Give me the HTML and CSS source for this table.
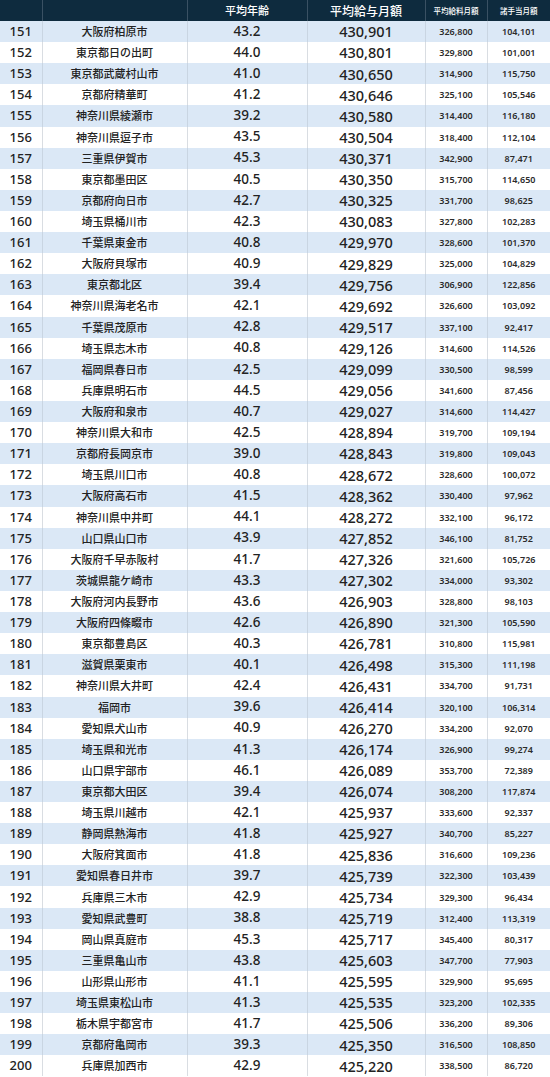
FILE: index.html
```html
<!DOCTYPE html>
<html lang="ja">
<head>
<meta charset="utf-8">
<link rel="stylesheet" href="styles.css">
</head>
<body>
<table class="rank">
<colgroup>
<col class="c-rank"><col class="c-city"><col class="c-age"><col class="c-total"><col class="c-base"><col class="c-allow">
</colgroup>
<thead>
<tr><th></th><th></th><th class="h-md">平均年齢</th><th class="h-lg">平均給与月額</th><th class="h-sm">平均給料月額</th><th class="h-sm">諸手当月額</th></tr>
</thead>
<tbody>
<tr><td class="no">151</td><td class="city">大阪府柏原市</td><td class="age">43.2</td><td class="total">430,901</td><td class="sm">326,800</td><td class="sm">104,101</td></tr>
<tr><td class="no">152</td><td class="city">東京都日の出町</td><td class="age">44.0</td><td class="total">430,801</td><td class="sm">329,800</td><td class="sm">101,001</td></tr>
<tr><td class="no">153</td><td class="city">東京都武蔵村山市</td><td class="age">41.0</td><td class="total">430,650</td><td class="sm">314,900</td><td class="sm">115,750</td></tr>
<tr><td class="no">154</td><td class="city">京都府精華町</td><td class="age">41.2</td><td class="total">430,646</td><td class="sm">325,100</td><td class="sm">105,546</td></tr>
<tr><td class="no">155</td><td class="city">神奈川県綾瀬市</td><td class="age">39.2</td><td class="total">430,580</td><td class="sm">314,400</td><td class="sm">116,180</td></tr>
<tr><td class="no">156</td><td class="city">神奈川県逗子市</td><td class="age">43.5</td><td class="total">430,504</td><td class="sm">318,400</td><td class="sm">112,104</td></tr>
<tr><td class="no">157</td><td class="city">三重県伊賀市</td><td class="age">45.3</td><td class="total">430,371</td><td class="sm">342,900</td><td class="sm">87,471</td></tr>
<tr><td class="no">158</td><td class="city">東京都墨田区</td><td class="age">40.5</td><td class="total">430,350</td><td class="sm">315,700</td><td class="sm">114,650</td></tr>
<tr><td class="no">159</td><td class="city">京都府向日市</td><td class="age">42.7</td><td class="total">430,325</td><td class="sm">331,700</td><td class="sm">98,625</td></tr>
<tr><td class="no">160</td><td class="city">埼玉県桶川市</td><td class="age">42.3</td><td class="total">430,083</td><td class="sm">327,800</td><td class="sm">102,283</td></tr>
<tr><td class="no">161</td><td class="city">千葉県東金市</td><td class="age">40.8</td><td class="total">429,970</td><td class="sm">328,600</td><td class="sm">101,370</td></tr>
<tr><td class="no">162</td><td class="city">大阪府貝塚市</td><td class="age">40.9</td><td class="total">429,829</td><td class="sm">325,000</td><td class="sm">104,829</td></tr>
<tr><td class="no">163</td><td class="city">東京都北区</td><td class="age">39.4</td><td class="total">429,756</td><td class="sm">306,900</td><td class="sm">122,856</td></tr>
<tr><td class="no">164</td><td class="city">神奈川県海老名市</td><td class="age">42.1</td><td class="total">429,692</td><td class="sm">326,600</td><td class="sm">103,092</td></tr>
<tr><td class="no">165</td><td class="city">千葉県茂原市</td><td class="age">42.8</td><td class="total">429,517</td><td class="sm">337,100</td><td class="sm">92,417</td></tr>
<tr><td class="no">166</td><td class="city">埼玉県志木市</td><td class="age">40.8</td><td class="total">429,126</td><td class="sm">314,600</td><td class="sm">114,526</td></tr>
<tr><td class="no">167</td><td class="city">福岡県春日市</td><td class="age">42.5</td><td class="total">429,099</td><td class="sm">330,500</td><td class="sm">98,599</td></tr>
<tr><td class="no">168</td><td class="city">兵庫県明石市</td><td class="age">44.5</td><td class="total">429,056</td><td class="sm">341,600</td><td class="sm">87,456</td></tr>
<tr><td class="no">169</td><td class="city">大阪府和泉市</td><td class="age">40.7</td><td class="total">429,027</td><td class="sm">314,600</td><td class="sm">114,427</td></tr>
<tr><td class="no">170</td><td class="city">神奈川県大和市</td><td class="age">42.5</td><td class="total">428,894</td><td class="sm">319,700</td><td class="sm">109,194</td></tr>
<tr><td class="no">171</td><td class="city">京都府長岡京市</td><td class="age">39.0</td><td class="total">428,843</td><td class="sm">319,800</td><td class="sm">109,043</td></tr>
<tr><td class="no">172</td><td class="city">埼玉県川口市</td><td class="age">40.8</td><td class="total">428,672</td><td class="sm">328,600</td><td class="sm">100,072</td></tr>
<tr><td class="no">173</td><td class="city">大阪府高石市</td><td class="age">41.5</td><td class="total">428,362</td><td class="sm">330,400</td><td class="sm">97,962</td></tr>
<tr><td class="no">174</td><td class="city">神奈川県中井町</td><td class="age">44.1</td><td class="total">428,272</td><td class="sm">332,100</td><td class="sm">96,172</td></tr>
<tr><td class="no">175</td><td class="city">山口県山口市</td><td class="age">43.9</td><td class="total">427,852</td><td class="sm">346,100</td><td class="sm">81,752</td></tr>
<tr><td class="no">176</td><td class="city">大阪府千早赤阪村</td><td class="age">41.7</td><td class="total">427,326</td><td class="sm">321,600</td><td class="sm">105,726</td></tr>
<tr><td class="no">177</td><td class="city">茨城県龍ケ崎市</td><td class="age">43.3</td><td class="total">427,302</td><td class="sm">334,000</td><td class="sm">93,302</td></tr>
<tr><td class="no">178</td><td class="city">大阪府河内長野市</td><td class="age">43.6</td><td class="total">426,903</td><td class="sm">328,800</td><td class="sm">98,103</td></tr>
<tr><td class="no">179</td><td class="city">大阪府四條畷市</td><td class="age">42.6</td><td class="total">426,890</td><td class="sm">321,300</td><td class="sm">105,590</td></tr>
<tr><td class="no">180</td><td class="city">東京都豊島区</td><td class="age">40.3</td><td class="total">426,781</td><td class="sm">310,800</td><td class="sm">115,981</td></tr>
<tr><td class="no">181</td><td class="city">滋賀県栗東市</td><td class="age">40.1</td><td class="total">426,498</td><td class="sm">315,300</td><td class="sm">111,198</td></tr>
<tr><td class="no">182</td><td class="city">神奈川県大井町</td><td class="age">42.4</td><td class="total">426,431</td><td class="sm">334,700</td><td class="sm">91,731</td></tr>
<tr><td class="no">183</td><td class="city">福岡市</td><td class="age">39.6</td><td class="total">426,414</td><td class="sm">320,100</td><td class="sm">106,314</td></tr>
<tr><td class="no">184</td><td class="city">愛知県犬山市</td><td class="age">40.9</td><td class="total">426,270</td><td class="sm">334,200</td><td class="sm">92,070</td></tr>
<tr><td class="no">185</td><td class="city">埼玉県和光市</td><td class="age">41.3</td><td class="total">426,174</td><td class="sm">326,900</td><td class="sm">99,274</td></tr>
<tr><td class="no">186</td><td class="city">山口県宇部市</td><td class="age">46.1</td><td class="total">426,089</td><td class="sm">353,700</td><td class="sm">72,389</td></tr>
<tr><td class="no">187</td><td class="city">東京都大田区</td><td class="age">39.4</td><td class="total">426,074</td><td class="sm">308,200</td><td class="sm">117,874</td></tr>
<tr><td class="no">188</td><td class="city">埼玉県川越市</td><td class="age">42.1</td><td class="total">425,937</td><td class="sm">333,600</td><td class="sm">92,337</td></tr>
<tr><td class="no">189</td><td class="city">静岡県熱海市</td><td class="age">41.8</td><td class="total">425,927</td><td class="sm">340,700</td><td class="sm">85,227</td></tr>
<tr><td class="no">190</td><td class="city">大阪府箕面市</td><td class="age">41.8</td><td class="total">425,836</td><td class="sm">316,600</td><td class="sm">109,236</td></tr>
<tr><td class="no">191</td><td class="city">愛知県春日井市</td><td class="age">39.7</td><td class="total">425,739</td><td class="sm">322,300</td><td class="sm">103,439</td></tr>
<tr><td class="no">192</td><td class="city">兵庫県三木市</td><td class="age">42.9</td><td class="total">425,734</td><td class="sm">329,300</td><td class="sm">96,434</td></tr>
<tr><td class="no">193</td><td class="city">愛知県武豊町</td><td class="age">38.8</td><td class="total">425,719</td><td class="sm">312,400</td><td class="sm">113,319</td></tr>
<tr><td class="no">194</td><td class="city">岡山県真庭市</td><td class="age">45.3</td><td class="total">425,717</td><td class="sm">345,400</td><td class="sm">80,317</td></tr>
<tr><td class="no">195</td><td class="city">三重県亀山市</td><td class="age">43.8</td><td class="total">425,603</td><td class="sm">347,700</td><td class="sm">77,903</td></tr>
<tr><td class="no">196</td><td class="city">山形県山形市</td><td class="age">41.1</td><td class="total">425,595</td><td class="sm">329,900</td><td class="sm">95,695</td></tr>
<tr><td class="no">197</td><td class="city">埼玉県東松山市</td><td class="age">41.3</td><td class="total">425,535</td><td class="sm">323,200</td><td class="sm">102,335</td></tr>
<tr><td class="no">198</td><td class="city">栃木県宇都宮市</td><td class="age">41.7</td><td class="total">425,506</td><td class="sm">336,200</td><td class="sm">89,306</td></tr>
<tr><td class="no">199</td><td class="city">京都府亀岡市</td><td class="age">39.3</td><td class="total">425,350</td><td class="sm">316,500</td><td class="sm">108,850</td></tr>
<tr><td class="no">200</td><td class="city">兵庫県加西市</td><td class="age">42.9</td><td class="total">425,220</td><td class="sm">338,500</td><td class="sm">86,720</td></tr>
</tbody>
</table>
</body>
</html>
```
FILE: styles.css
```css
html, body {
  margin: 0;
  padding: 0;
  background: #ffffff;
}

body {
  font-family: "Noto Sans", "Noto Sans CJK JP", sans-serif;
  color: #222222;
}

.rank {
  width: 550px;
  border-collapse: collapse;
  table-layout: fixed;
}

.c-rank { width: 42px; }
.c-city { width: 145px; }
.c-age { width: 120px; }
.c-total { width: 118px; }
.c-base { width: 62px; }
.c-allow { width: 63px; }

.rank thead th {
  height: 21px;
  padding: 0;
  background: #0e2b3e;
  color: #ffffff;
  font-family: "Noto Sans CJK JP", sans-serif;
  font-weight: 500;
  text-align: center;
  vertical-align: middle;
  border-left: 1px solid #3a5163;
  line-height: 1;
}

.rank thead th:first-child { border-left: none; }

.h-md { font-size: 11px; }
.h-lg { font-size: 12px; }
.h-sm { font-size: 7.5px; }

.rank tbody td {
  height: 21.12px;
  padding: 0;
  text-align: center;
  vertical-align: middle;
  border-left: 1px solid #d9dde2;
  line-height: 1;
  white-space: nowrap;
}

.rank tbody td:first-child { border-left: none; }

.rank tbody tr:nth-child(odd) td {
  background: #dbe8f6;
  border-left-color: #c9d5e2;
}

.no {
  font-size: 13px;
  font-weight: 500;
}

.city {
  font-family: "Noto Sans CJK JP", sans-serif;
  font-size: 11px;
  font-weight: 500;
}

.age {
  font-size: 13.5px;
  font-weight: 500;
}

.total {
  font-size: 14.5px;
  font-weight: 500;
}

.sm {
  font-size: 9px;
  font-weight: 600;
  color: #2b2b2b;
}
```
